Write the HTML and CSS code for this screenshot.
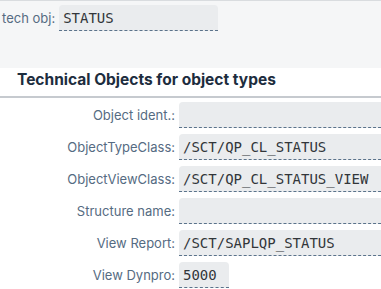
FILE: index.html
```html
<!DOCTYPE html>
<html lang="en">
<head>
  <meta charset="UTF-8">
  <title>Technical Objects</title>
  <link rel="stylesheet" href="styles.css">
</head>
<body>
  <!-- Header area with technical object -->
  <div class="top-panel">
    <div class="top-row">
      <label class="top-label">tech obj:</label>
      <div class="field field-top">STATUS</div>
    </div>
  </div>

  <div class="section-title">
    <h2>Technical Objects for object types</h2>
  </div>

  <!-- Form rows -->
  <div class="form">
    <label class="form-label">Object ident.:</label>
    <div class="field"></div>

    <label class="form-label">ObjectTypeClass:</label>
    <div class="field">/SCT/QP_CL_STATUS</div>

    <label class="form-label">ObjectViewClass:</label>
    <div class="field">/SCT/QP_CL_STATUS_VIEW</div>

    <label class="form-label">Structure name:</label>
    <div class="field"></div>

    <label class="form-label">View Report:</label>
    <div class="field">/SCT/SAPLQP_STATUS</div>

    <label class="form-label">View Dynpro:</label>
    <div class="field field-short">5000</div>
  </div>
</body>
</html>
```

FILE: styles.css
```css
/* Base styling */
body {
  margin: 0;
  font-family: Inter, 'Noto Sans', sans-serif;
  background: #fff;
  color: #32363a;
  overflow: hidden;
}
.top-panel {
  background: #f5f6f7;
  border-top: 1px solid #d9dcdf;
  height: 67px;
}
.top-row {
  display: flex;
  align-items: center;
  gap: 4px;
  padding: 4px 0 0 2px;
}
.top-label,
.form-label {
  font-size: 13px;
  color: #556b82;
}
.field {
  box-sizing: border-box;
  height: 26px;
  background: #eaecee;
  border-radius: 4px 4px 0 0;
  border-bottom: 1px dashed #5b738b;
  padding: 3px 4px 0;
  font-family: 'DejaVu Sans Mono', monospace;
  font-size: 14px;
  line-height: 20px;
  color: #32363a;
  white-space: nowrap;
}
.field-top {
  width: 159px;
}
.field-short {
  width: 50px;
}
.section-title {
  height: 28px;
  border-bottom: 2px solid #c6cacf;
  padding-left: 17px;
}
.section-title h2 {
  margin: 0;
  font-size: 15.5px;
  line-height: 22px;
  padding-top: 1px;
  color: #1d2d3e;
}
.form {
  display: grid;
  grid-template-columns: 175px 1fr;
  column-gap: 4px;
  row-gap: 6px;
  padding-top: 4px;
  margin-right: -10px;
}
.form-label {
  text-align: right;
  line-height: 26px;
}
```
